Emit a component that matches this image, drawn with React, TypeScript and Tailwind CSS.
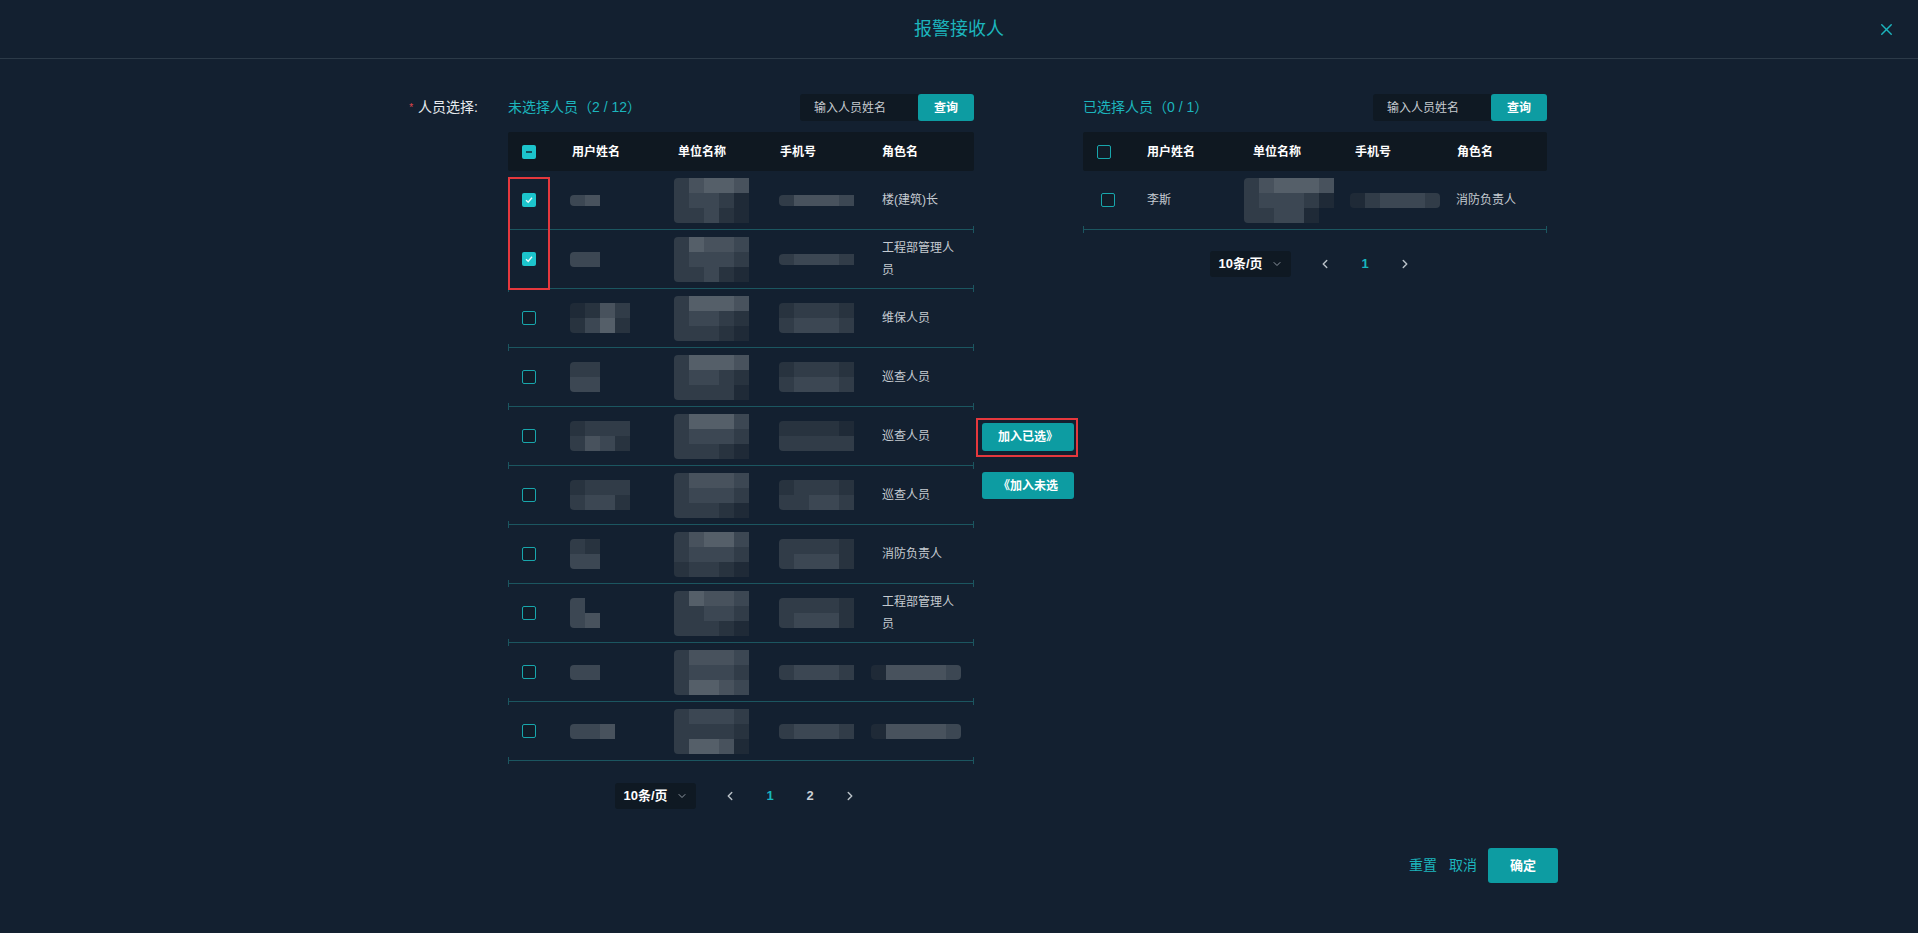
import React from "react";
import { X, ChevronLeft, ChevronRight, ChevronDown } from "lucide-react";

type Box = "checked" | "unchecked" | "indeterminate";

const shades: Record<string, string> = {
  "0": "bg-transparent",
  "1": "bg-[#1f2a37]",
  "2": "bg-[#28333f]",
  "3": "bg-[#313c48]",
  "4": "bg-[#3c4753]",
  "5": "bg-[#48525d]",
  "6": "bg-[#555f69]",
};

const CheckBox = ({ state }: { state: Box }) => {
  if (state === "checked") {
    return (
      <span className="flex h-[14px] w-[14px] items-center justify-center rounded-[2px] bg-[#1cc4cc]">
        <svg width="10" height="10" viewBox="0 0 10 10" fill="none">
          <path d="M2 5.2 L4.2 7.2 L8 2.8" stroke="#e8fbfc" strokeWidth="1.4" />
        </svg>
      </span>
    );
  }
  if (state === "indeterminate") {
    return (
      <span className="flex h-[14px] w-[14px] items-center justify-center rounded-[2px] bg-[#1cc4cc]">
        <span className="h-[2px] w-[6px] bg-[#14505a]" />
      </span>
    );
  }
  return (
    <span className="block h-[14px] w-[14px] rounded-[2px] border border-[#18a6ac] bg-[#111c28]" />
  );
};

// pixelated blur blocks over private data
const Mosaic = ({ rows, tall }: { rows: string[]; tall?: boolean }) => (
  <div className="flex flex-col overflow-hidden rounded-[4px]">
    {rows.map((r, i) => (
      <div key={i} className="flex">
        {r.split("").map((c, j) => (
          <span
            key={j}
            className={`${tall === false ? "h-[11px]" : "h-[15px]"} w-[15px] ${shades[c]}`}
          />
        ))}
      </div>
    ))}
  </div>
);

const Divider = () => (
  <div className="relative h-px bg-[#1b5660]">
    <span className="absolute left-0 top-[-3px] h-[7px] w-px bg-[#1b5660]" />
    <span className="absolute right-0 top-[-3px] h-[7px] w-px bg-[#1b5660]" />
  </div>
);

const Search = () => (
  <div className="flex h-[27px]">
    <div className="flex w-[118px] items-center rounded-l-[3px] bg-[#0f1923] pl-[14px] text-[12px] text-[#c6cbd0]">
      输入人员姓名
    </div>
    <button className="w-[56px] rounded-[3px] bg-[#0d9ca2] text-[12px] font-bold text-white">
      查询
    </button>
  </div>
);

const TableHead = ({ box }: { box: Box }) => (
  <div className="grid h-[39px] grid-cols-[48px_106px_102px_102px_1fr] items-center rounded-[2px] bg-[#0f1821] text-[12px] font-bold text-white">
    <div className="pl-[14px]">
      <CheckBox state={box} />
    </div>
    <div className="pl-[16px]">用户姓名</div>
    <div className="pl-[16px]">单位名称</div>
    <div className="pl-[16px]">手机号</div>
    <div className="pl-[16px]">角色名</div>
  </div>
);

type Row = {
  checked: boolean;
  name: string[];
  nameShort?: boolean;
  unit: string[];
  phone: string[];
  phoneShort?: boolean;
  role?: string;
  roleMask?: string[];
};

const leftRows: Row[] = [
  { checked: true, name: ["45"], nameShort: true, unit: ["35665", "34431", "33421"], phone: ["35554"], phoneShort: true, role: "楼(建筑)长" },
  { checked: true, name: ["44"], unit: ["36554", "34443", "33421"], phone: ["34443"], phoneShort: true, role: "工程部管理人员" },
  { checked: false, name: ["1253", "2462"], unit: ["36665", "34432", "33321"], phone: ["23332", "34443"], role: "维保人员" },
  { checked: false, name: ["33", "44"], unit: ["36665", "34432", "33331"], phone: ["23332", "34443"], role: "巡查人员" },
  { checked: false, name: ["2333", "3542"], unit: ["36664", "34443", "33321"], phone: ["22221", "33333"], role: "巡查人员" },
  { checked: false, name: ["2333", "3442"], unit: ["35554", "34443", "33321"], phone: ["23332", "33443"], role: "巡查人员" },
  { checked: false, name: ["32", "44"], unit: ["35664", "34443", "23321"], phone: ["33332", "34442"], role: "消防负责人" },
  { checked: false, name: ["40", "45"], unit: ["36554", "33443", "33321"], phone: ["33332", "34442"], role: "工程部管理人员" },
  { checked: false, name: ["44"], unit: ["35554", "34443", "36654"], phone: ["34443"], roleMask: ["155554"] },
  { checked: false, name: ["445"], unit: ["34443", "33332", "36651"], phone: ["34443"], roleMask: ["155554"] },
];

const DataRow = ({ row }: { row: Row }) => (
  <>
    <div className="grid h-[58px] grid-cols-[48px_106px_102px_102px_1fr] items-center text-[12px] leading-[22px] text-[#c5cbd1]">
      <div className="pl-[14px]">
        <CheckBox state={row.checked ? "checked" : "unchecked"} />
      </div>
      <div className="pl-[14px]">
        <Mosaic rows={row.name} tall={!row.nameShort} />
      </div>
      <div className="pl-[12px]">
        <Mosaic rows={row.unit} />
      </div>
      <div className="pl-[15px]">
        <Mosaic rows={row.phone} tall={!row.phoneShort} />
      </div>
      <div className="pl-[16px] pr-[16px]">
        {row.role ? (
          row.role
        ) : (
          <div className="-ml-[11px]">
            <Mosaic rows={row.roleMask || []} />
          </div>
        )}
      </div>
    </div>
    <Divider />
  </>
);

const Pager = ({ pages, offset }: { pages: number[]; offset: string }) => (
  <div className={`flex items-center ${offset}`}>
    <div className="flex h-[26px] w-[81px] items-center justify-center gap-[8px] rounded-[3px] bg-[#0f1923] text-[13px] font-bold text-white">
      10条/页
      <ChevronDown size={12} className="text-[#8d96a0]" />
    </div>
    <div className="ml-[14px] flex items-center">
      <span className="flex h-[20px] w-[40px] items-center justify-center text-[#b9c0c7]">
        <ChevronLeft size={14} strokeWidth={2.5} />
      </span>
      {pages.map((p) => (
        <span
          key={p}
          className={`flex h-[20px] w-[40px] items-center justify-center text-[13px] font-bold ${p === 1 ? "text-[#17b6be]" : "text-[#c9cfd5]"}`}
        >
          {p}
        </span>
      ))}
      <span className="flex h-[20px] w-[40px] items-center justify-center text-[#b9c0c7]">
        <ChevronRight size={14} strokeWidth={2.5} />
      </span>
    </div>
  </div>
);

export default function App() {
  return (
    <div className="h-[933px] w-full bg-[#132030] font-['Liberation_Sans','Noto_Sans_CJK_SC',sans-serif]">
      <div className="grid h-[59px] grid-cols-[1fr_auto_1fr] items-center border-b border-[#2c3a48]">
        <div />
        <div className="text-[18px] text-[#1cb5bd]">报警接收人</div>
        <div className="flex justify-end pr-[22px] text-[#1cb5bd]">
          <X size={19} strokeWidth={1.8} />
        </div>
      </div>

      <div className="flex pl-[378px] pt-[35px]">
        <div className="flex h-[27px] w-[100px] items-center justify-end text-[14px] text-[#e6eaee]">
          <span className="mr-[5px] text-[10px] text-[#e0474d]">*</span>
          人员选择:
        </div>

        <div className="ml-[30px] w-[466px]">
          <div className="flex h-[27px] items-center justify-between">
            <span className="text-[14px] text-[#1cb5bd]">未选择人员（2 / 12）</span>
            <Search />
          </div>
          <div className="relative mt-[11px]">
            <TableHead box="indeterminate" />
            {leftRows.map((r, i) => (
              <DataRow key={i} row={r} />
            ))}
            <div className="absolute left-0 top-[45px] h-[113px] w-[42px] border-2 border-[#e5383d]" />
          </div>
          <div className="mt-[22px]">
            <Pager pages={[1, 2]} offset="pl-[107px]" />
          </div>
        </div>

        <div className="w-[109px] pl-[2px] pt-[324px]">
          <div className="w-[102px] border-2 border-[#e5383d] pl-[4px] pt-[3px] pb-[4px]">
            <button className="h-[28px] w-[92px] rounded-[3px] bg-[#0d9ca2] text-[12px] font-bold text-white">
              加入已选》
            </button>
          </div>
          <button className="ml-[6px] mt-[15px] h-[27px] w-[92px] rounded-[3px] bg-[#0d9ca2] text-[12px] font-bold text-white">
            《加入未选
          </button>
        </div>

        <div className="w-[464px]">
          <div className="flex h-[27px] items-center justify-between">
            <span className="text-[14px] text-[#1cb5bd]">已选择人员（0 / 1）</span>
            <Search />
          </div>
          <div className="mt-[11px]">
            <TableHead box="unchecked" />
            <div className="grid h-[58px] grid-cols-[48px_104px_103px_102px_1fr] items-center text-[12px] text-[#c5cbd1]">
              <div className="pl-[18px]">
                <CheckBox state="unchecked" />
              </div>
              <div className="pl-[16px]">李斯</div>
              <div className="pl-[9px]">
                <Mosaic rows={["356665", "344431", "334410"]} />
              </div>
              <div className="pl-[12px]">
                <Mosaic rows={["134443"]} />
              </div>
              <div className="pl-[16px]">消防负责人</div>
            </div>
            <Divider />
          </div>
          <div className="mt-[21px]">
            <Pager pages={[1]} offset="pl-[127px]" />
          </div>
        </div>
      </div>

      <div className="mt-[39px] flex items-center justify-end pr-[360px]">
        <span className="text-[14px] text-[#1cb5bd]">重置</span>
        <span className="ml-[12px] text-[14px] text-[#1cb5bd]">取消</span>
        <button className="ml-[11px] h-[35px] w-[70px] rounded-[3px] bg-[#0d9ca2] text-[13px] font-bold text-white">
          确定
        </button>
      </div>
    </div>
  );
}
